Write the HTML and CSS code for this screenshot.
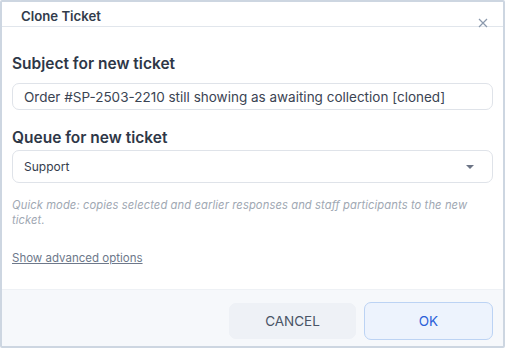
FILE: index.html
```html
<!DOCTYPE html>
<html>
<head>
<meta charset="utf-8">
<link rel="stylesheet" href="styles.css">
</head>
<body>
<div class="dialog">
  <div class="header">
    <span class="title">Clone Ticket</span>
    <button class="close" aria-label="Close">
      <svg width="10" height="10" viewBox="0 0 10 10"><path d="M1 1L9 9M9 1L1 9" stroke="#8b99ad" stroke-width="1.2" fill="none"/></svg>
    </button>
  </div>
  <div class="body">
    <div class="field subject">
      <label class="label">Subject for new ticket</label>
      <div class="input">Order #SP-2503-2210 still showing as awaiting collection [cloned]</div>
    </div>
    <div class="field queue">
      <label class="label">Queue for new ticket</label>
      <div class="select"><span>Support</span><span class="caret"></span></div>
    </div>
    <p class="help">Quick mode: copies selected and earlier responses and staff participants to the new ticket.</p>
    <a class="advanced" href="#">Show advanced options</a>
  </div>
  <div class="footer">
    <button class="btn cancel">CANCEL</button>
    <button class="btn ok">OK</button>
  </div>
</div>
</body>
</html>
```
FILE: styles.css
```css
* { box-sizing: border-box; }
html, body { margin: 0; padding: 0; background: #fff; }
body { font-family: Inter, "Noto Sans", sans-serif; color: #2d3748; }
.dialog {
  width: 505px; height: 348px;
  border: 2px solid #cdd6e1;
  border-radius: 2px;
  display: flex; flex-direction: column;
  position: relative;
  background: #fff;
}
.header {
  height: 25px;
  border-bottom: 1px solid #e1e6ec;
  padding-left: 19px;
  display: flex; align-items: center;
}
.title { font-size: 13.2px; font-weight: 600; color: #323c4b; padding-top: 4px; }
.close {
  position: absolute; right: 14px; top: 15px;
  width: 12px; height: 12px; padding: 0; border: 0; background: transparent;
  display: flex; align-items: center; justify-content: center;
}
.body { flex: 1; padding: 28px 10px 0 10px; display: flex; flex-direction: column; }
.label { display: block; font-size: 15.5px; font-weight: 600; color: #2e3747; line-height: 18px; }
.input {
  margin-top: 10px; height: 27px;
  border: 1px solid #dfe3e9; border-radius: 7px;
  padding: 0 11px; font-size: 13.5px; color: #3b4453;
  display: flex; align-items: center; white-space: nowrap;
}
.queue { margin-top: 19px; }
.select {
  margin-top: 3px; height: 33px;
  border: 1px solid #dfe3e9; border-radius: 7px;
  padding: 0 11px; font-size: 12px; color: #343d4c;
  display: flex; align-items: center; justify-content: space-between;
}
.caret { width: 0; height: 0; border-left: 4px solid transparent; border-right: 4px solid transparent; border-top: 4px solid #6c7485; margin-right: 7px; }
.help { margin: 15px 0 0 0; font-size: 11.2px; letter-spacing: 0.1px; font-style: italic; color: #a0a8b3; line-height: 15px; padding-right: 14px; }
.advanced { margin-top: 23px; font-size: 11.5px; color: #6d788a; text-decoration: underline; align-self: flex-start; }
.footer {
  height: 57px; background: #f6f8fb; border-top: 1px solid #eef1f5;
  display: flex; justify-content: flex-end; align-items: center; gap: 8px;
  padding: 5px 10px 0 0;
}
.btn { font-family: Inter, "Noto Sans", sans-serif; font-size: 13.5px; border-radius: 7px; height: 36px; cursor: pointer; }
.cancel { width: 127px; background: #eef1f6; border: 1px solid #eef1f6; color: #4a5466; }
.ok { width: 129px; height: 38px; background: #edf3fd; border: 1px solid #bcd3f4; color: #2b5fd9; }
```
